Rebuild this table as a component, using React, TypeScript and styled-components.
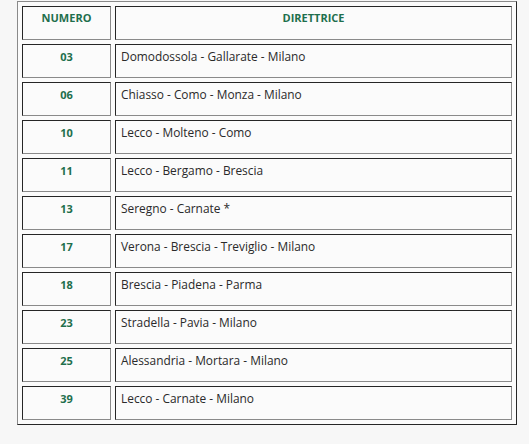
import React from "react";
import styled, { createGlobalStyle } from "styled-components";

const Global = createGlobalStyle`
  html, body {
    margin: 0;
    padding: 0;
    background: #f7f7f7;
  }
  body {
    font-family: "Open Sans", "Noto Sans", "DejaVu Sans", sans-serif;
    font-size: 11px;
  }
`;

const Page = styled.div`
  padding: 1px 0 0 17px;
  width: 529px;
  height: 444px;
  box-sizing: border-box;
`;

const Table = styled.table`
  width: 500px;
  table-layout: fixed;
  border-collapse: separate;
  border-spacing: 4px;
  border-style: solid;
  border-width: 1px;
  border-color: #8a8a8a #262626 #262626 #8a8a8a;
  background: #fbfbfb;
`;

const Row = styled.tr`
  height: 34px;
`;

const Cell = styled.td<{ $num?: boolean; $head?: boolean }>`
  border-style: solid;
  border-width: 1px;
  border-color: #262626 #8a8a8a #8a8a8a #262626;
  vertical-align: top;
  padding: ${(p) => (p.$head ? "3px 5px 2px" : "4px 5px 1px")};
  line-height: 15px;
  font-size: ${(p) => (p.$num || p.$head ? "11px" : "11.9px")};
  text-align: ${(p) => (p.$num || p.$head ? "center" : "left")};
  font-weight: ${(p) => (p.$num || p.$head ? 700 : 400)};
  color: ${(p) => (p.$num || p.$head ? "#1f6f4d" : "#2a2a2a")};
  white-space: nowrap;
`;

const NumCol = styled.col`
  width: 89px;
`;

const rows: [string, string][] = [
  ["03", "Domodossola - Gallarate - Milano"],
  ["06", "Chiasso - Como - Monza - Milano"],
  ["10", "Lecco - Molteno - Como"],
  ["11", "Lecco - Bergamo - Brescia"],
  ["13", "Seregno - Carnate *"],
  ["17", "Verona - Brescia - Treviglio - Milano"],
  ["18", "Brescia - Piadena - Parma"],
  ["23", "Stradella - Pavia - Milano"],
  ["25", "Alessandria - Mortara - Milano"],
  ["39", "Lecco - Carnate - Milano"],
];

export default function App() {
  return (
    <Page>
      <Global />
      <Table>
        <colgroup>
          <NumCol />
          <col />
        </colgroup>
        <thead>
          <Row>
            <Cell as="th" $head>
              NUMERO
            </Cell>
            <Cell as="th" $head>
              DIRETTRICE
            </Cell>
          </Row>
        </thead>
        <tbody>
          {rows.map(([n, d]) => (
            <Row key={n}>
              <Cell $num>{n}</Cell>
              <Cell>{d}</Cell>
            </Row>
          ))}
        </tbody>
      </Table>
    </Page>
  );
}
